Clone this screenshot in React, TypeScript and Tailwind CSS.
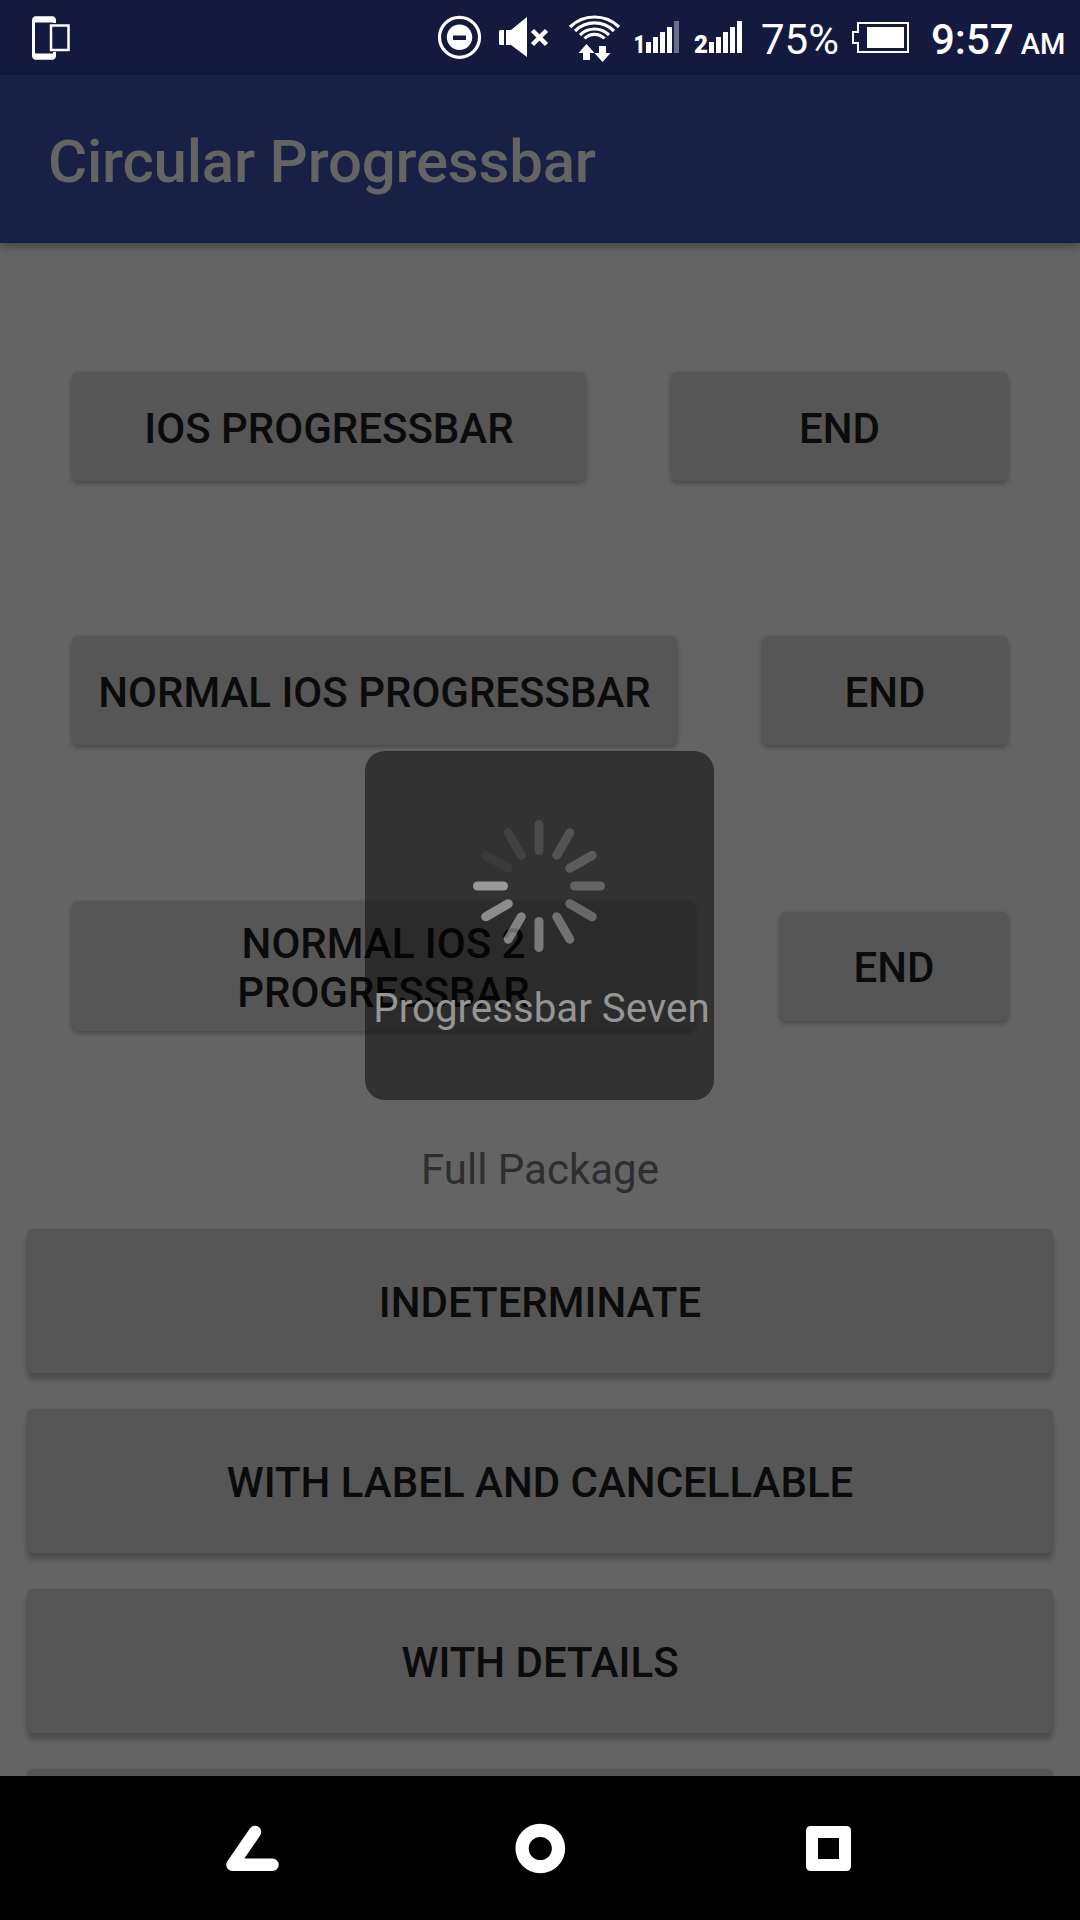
import type { ReactNode } from "react";

function Signal({ label, x, weak }: { label: string; x: number; weak?: boolean }) {
  const tops = [42, 37, 32, 27, 21];
  return (
    <svg width="60" height="75" viewBox="0 0 60 75" fill="#fff" className="shrink-0">
      <text x={label === "1" ? x - 12.500 : x - 15} y="53" fontFamily="Roboto" fontWeight="900" fontSize="26.500" textLength={label === "1" ? 12 : 14} lengthAdjust="spacingAndGlyphs">
        {label}
      </text>
      {tops.map((top, i) => (
        <rect key={top} x={x + i * 7} y={top} width="5" height={53 - top} fill={weak && i === 4 ? "#6b6e88" : "#fff"} />
      ))}
    </svg>
  );
}

function StatusBar() {
  return (
    <div className="flex h-[75px] shrink-0 bg-[#141940] text-white">
      <svg width="80" height="75" viewBox="0 0 80 75" fill="none" stroke="#fff">
        <rect x="33.5" y="18" width="21" height="40" rx="2.5" strokeWidth="3" />
        <path d="M34 19.5h20M34 56.5h20" strokeWidth="6" />
        <rect x="49" y="23" width="22" height="29" fill="#141940" stroke="none" />
        <rect x="51" y="25.5" width="17.500" height="24.500" strokeWidth="2.500" />
      </svg>
      <div className="ml-auto flex">
        <svg width="60" height="75" viewBox="430 0 60 75" fill="none">
          <circle cx="459.500" cy="37.300" r="20" stroke="#fff" strokeWidth="3.200" />
          <circle cx="459.500" cy="37.300" r="12.700" fill="#fff" />
          <rect x="453" y="35.500" width="13" height="4.500" fill="#141940" />
        </svg>
        <svg width="70" height="75" viewBox="490 0 70 75" fill="#fff">
          <path d="M499 31.500q0-1.500 1.500-1.500h3.500v15h-3.500q-1.500 0-1.500-1.500zM506 30h5L527 17v40L511 45h-5z" />
          <path d="M532.500 30.500l14 14M546.500 30.500l-14 14" stroke="#fff" strokeWidth="4.500" />
        </svg>
        <svg width="70" height="75" viewBox="560 0 70 75" fill="none" stroke="#fff" strokeWidth="3.200">
          <path d="M570 27A35 35 0 0 1 619 27M575 31A27.500 27.500 0 0 1 614 31M580 35A20.500 20.500 0 0 1 609 35M584.500 38.500A14 14 0 0 1 604.500 38.500" />
          <path d="M586.500 44l8 9h-4.500v7h-7v-7h-4.500zM599 46h7v7h4.500l-8 9-8-9h4.500z" fill="#fff" stroke="none" />
        </svg>
        <Signal label="1" x={16} weak />
        <Signal label="2" x={19} />
        <div className="w-[97px] pl-[11px] pt-[15px] text-[42px] leading-[49px]">75%</div>
        <svg width="70" height="75" viewBox="847 0 70 75" fill="none">
          <path d="M858 23h50v29h-50v-9h-5V32h5z" stroke="#fff" strokeWidth="2" />
          <rect x="867" y="27" width="37" height="21" fill="#fff" />
        </svg>
        <div className="flex w-[163px] items-baseline gap-[7px] pl-[14px] pt-[15px] text-[42px] leading-[49px] font-medium">
          <span>9:57</span>
          <span className="text-[29px]">AM</span>
        </div>
      </div>
    </div>
  );
}

function Btn({ children, className }: { children?: ReactNode; className: string }) {
  return (
    <button
      className={`flex items-center justify-center rounded-[6px] bg-[#565656] text-[42px] leading-[49px] font-medium text-[#0b0b0b] ${className}`}
    >
      {children}
    </button>
  );
}

const small = "shadow-[0_3px_5px_rgba(0,0,0,0.22),0_0_4px_rgba(0,0,0,0.08)]";
const wide = "h-36 shrink-0 pt-[3px] shadow-[0_7px_5px_rgba(0,0,0,0.22),0_0_4px_rgba(0,0,0,0.08)]";

function Dialog() {
  return (
    <div className="absolute left-[365px] top-[751px] flex h-[349px] w-[349px] flex-col items-center rounded-[20px] bg-black/50">
      <svg width="140" height="140" viewBox="-70 -70 140 140" className="mt-[65px] mr-[1px] shrink-0">
        {Array.from({ length: 12 }, (_, i) => (
          <line
            key={i}
            x1="-61.500"
            x2="-35.500"
            y1="0"
            y2="0"
            stroke="#fff"
            strokeWidth="9"
            strokeLinecap="round"
            strokeOpacity={0.5 - i * 0.042}
            transform={`rotate(${-30 * i})`}
          />
        ))}
      </svg>
      <div className="mt-[29px] whitespace-nowrap pl-[4px] text-[40.25px] leading-[47px] text-[#959595]">Progressbar Seven</div>
    </div>
  );
}

export default function App() {
  return (
    <div className="relative flex h-[1920px] w-[1080px] flex-col overflow-hidden bg-[#646464] font-['Roboto',sans-serif]">
      <StatusBar />
      <header className="z-10 flex h-[168px] shrink-0 items-center bg-[#192046] pt-[6px] pl-[48px] text-[60px] font-medium tracking-[-0.22px] text-[#646464] shadow-[0_3px_9px_rgba(0,0,0,0.35)]">
        <h1>Circular Progressbar</h1>
      </header>
      <main className="flex min-h-0 flex-1 flex-col overflow-hidden">
        <div className="mx-[72px] mt-[129px] flex shrink-0 justify-between">
          <Btn className={`h-[109px] w-[514px] pt-1 ${small}`}>IOS PROGRESSBAR</Btn>
          <Btn className={`h-[109px] w-[337px] pt-1 ${small}`}>END</Btn>
        </div>
        <div className="mx-[72px] mt-[155px] flex shrink-0 justify-between">
          <Btn className={`h-[109px] w-[605px] pt-1 ${small}`}>NORMAL IOS PROGRESSBAR</Btn>
          <Btn className={`h-[109px] w-[246px] pt-1 ${small}`}>END</Btn>
        </div>
        <div className="mx-[72px] mt-[156px] flex shrink-0 items-center justify-between">
          <Btn className={`h-[130px] w-[623px] pt-1 ${small}`}>
            NORMAL IOS 2<br />
            PROGRESSBAR
          </Btn>
          <Btn className={`h-[109px] w-[228px] pt-[2px] ${small}`}>END</Btn>
        </div>
        <p className="mt-[114px] shrink-0 text-center text-[42px] leading-[49px] text-[#2e2e2e]">Full Package</p>
        <div className="mx-[27px] mt-[35px] flex flex-col gap-9">
          <Btn className={wide}>INDETERMINATE</Btn>
          <Btn className={wide}>WITH LABEL AND CANCELLABLE</Btn>
          <Btn className={wide}>WITH DETAILS</Btn>
          <Btn className={wide} />
        </div>
      </main>
      <nav className="z-10 flex h-36 shrink-0 items-center justify-between bg-black px-[216px]">
        <svg width="72" height="144" viewBox="216 1776 72 144" fill="none" stroke="#fff" strokeWidth="12.500" strokeLinecap="round" strokeLinejoin="round">
          <path d="M255 1832L232.500 1864.800H272.500" />
        </svg>
        <svg width="72" height="144" viewBox="504 1776 72 144" fill="none" stroke="#fff" strokeWidth="13.300">
          <circle cx="540.300" cy="1848.500" r="18.200" />
        </svg>
        <svg width="72" height="144" viewBox="792 1776 72 144">
          <path d="M811 1826h35q5 0 5 5v35q0 5-5 5h-35q-5 0-5-5v-35q0-5 5-5zm7 12v21h21v-21z" fill="#fff" fillRule="evenodd" />
        </svg>
      </nav>
      <Dialog />
    </div>
  );
}
